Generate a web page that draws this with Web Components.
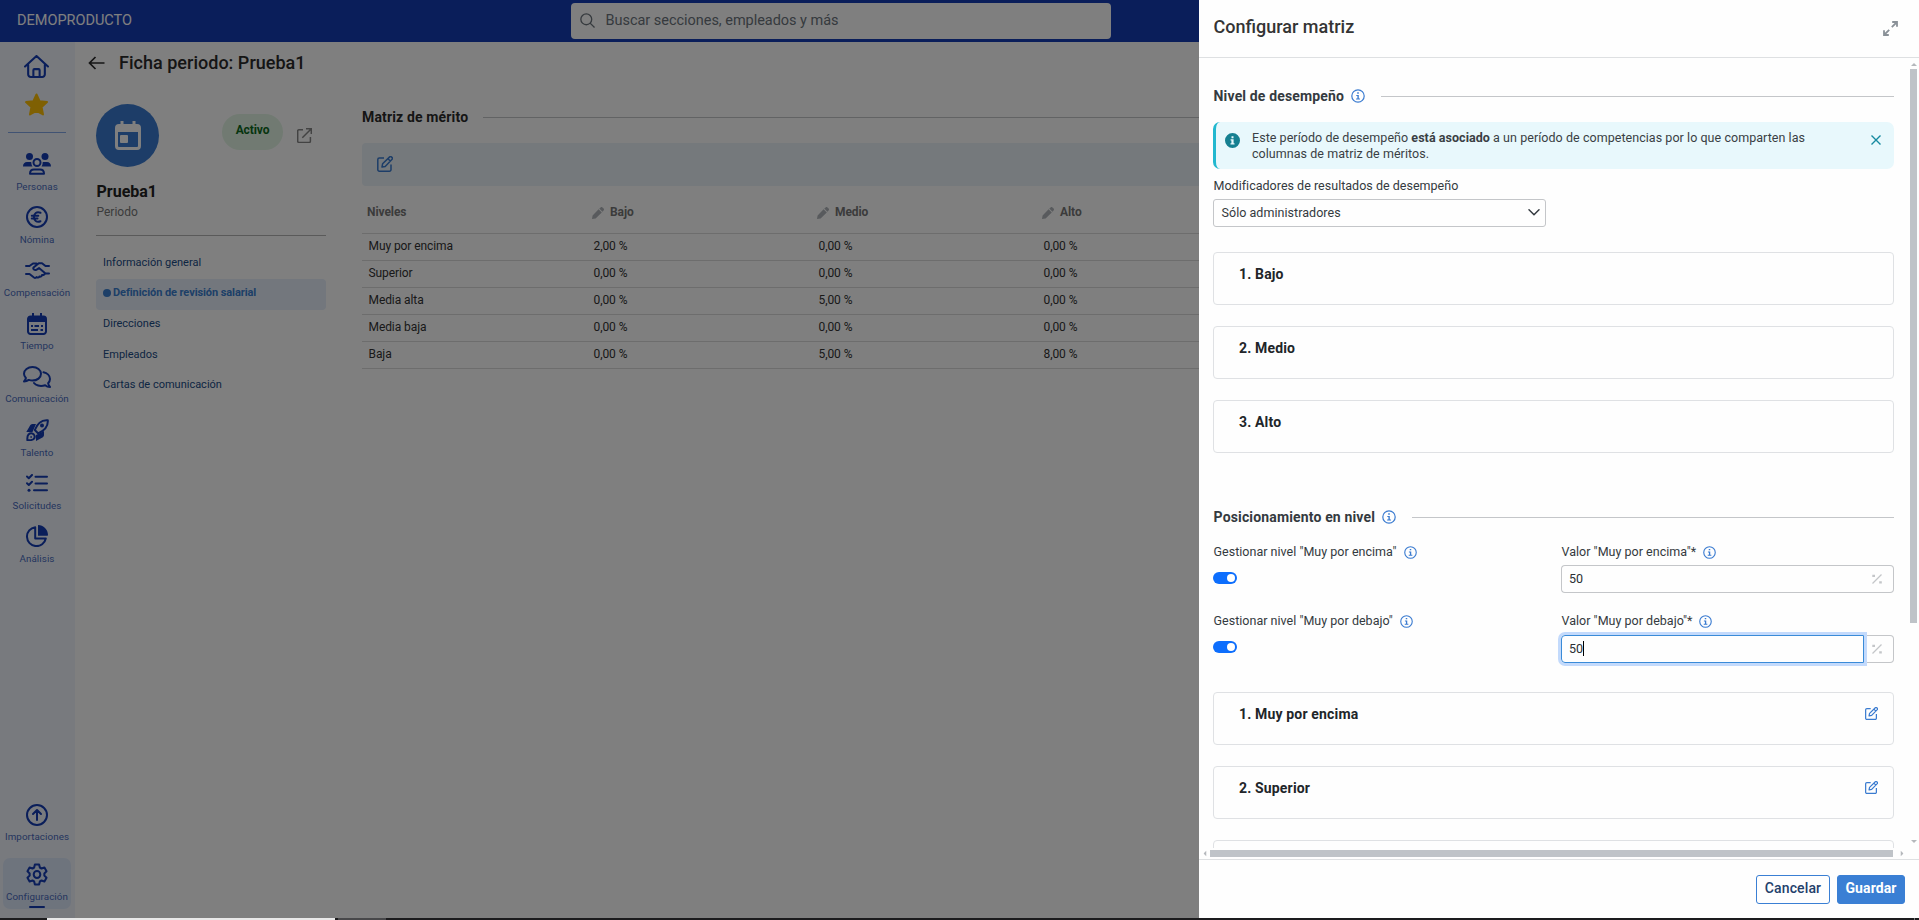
<!DOCTYPE html>
<html lang="es">
<head>
<meta charset="utf-8">
<title>Configurar matriz</title>
<style>
html,body{margin:0;height:100%;overflow:hidden}
body{font-family:Roboto,"Liberation Sans",sans-serif;color:#343a40;background:#fff}
</style>
</head>
<body>
<hr-app></hr-app>
<script>
const ICONS = {
  home:['0 0 24 22','<g fill="none" stroke="currentColor" stroke-width="2" stroke-linejoin="round" stroke-linecap="round"><path d="M1 11 12 1l11 10M4 9v9.500a2.500 2.500 0 0 0 2.500 2.500h11a2.500 2.500 0 0 0 2.500-2.500V9M9 21v-6.500a1 1 0 0 1 1-1h4a1 1 0 0 1 1 1V21"/></g>'],
  star:['0 0 25 23','<path fill="currentColor" stroke="currentColor" stroke-width="2" stroke-linejoin="round" d="m12.500 1.500 3.100 6.700 7.400.9-5.400 5 1.400 7.300-6.500-3.600L6 21.400l1.400-7.300L2 9.100l7.400-.9z"/>'],
  people:['0 0 28 22','<g fill="currentColor"><circle cx="6.500" cy="3.500" r="3.500"/><circle cx="22" cy="3.500" r="3.500"/><path d="M0 13.500C0 10.500 1.700 9 4 9h4.200c.3 2 .3 3 1.300 4.500zM28 13.500C28 10.500 26.300 9 24 9h-4.200c-.3 2-.3 3-1.300 4.500z"/></g><g fill="none" stroke="currentColor" stroke-width="2"><circle cx="14" cy="9.500" r="3.500"/><path stroke-linejoin="round" d="M7 20.800c0-3 1.500-4.300 4-4.300h6c2.500 0 4 1.300 4 4.300z"/></g>'],
  euro:['0 0 22 22','<g fill="none" stroke="currentColor" stroke-width="2"><circle cx="11" cy="11" r="10"/><path stroke-linecap="round" d="M14.500 6.800c-4-1.500-6.500.7-6.500 4.200s2.500 5.700 6.500 4.200M5.800 9.800h6.500M5.800 12.400h5.700"/></g>'],
  hands:['0 0 25 17','<g fill="none" stroke="currentColor" stroke-width="2" stroke-linecap="round" stroke-linejoin="round"><path d="M1 4h3.500L8 1.500h3.500M24 4h-3.500L17 1.200h-3.200L8.500 5.600c-.8 1.200 1 3 2.800 2.200l2.700-1.700 6.500 5.400H24M1 12h3.500l4.500 3.500c1 .7 2 .4 2.400-.4 1 .8 2.600.7 3-.6 1.200.5 2.600-.2 2.600-1.500 1.500.3 3-.7 3-1.800"/></g>'],
  calendar:['0 0 20 22','<path fill="none" stroke="currentColor" stroke-width="2" d="M3.500 3.500h13A2.500 2.500 0 0 1 19 6v12.500a2.500 2.500 0 0 1-2.500 2.500h-13A2.500 2.500 0 0 1 1 18.500V6a2.500 2.500 0 0 1 2.500-2.500z"/><path fill="currentColor" d="M1 5.500A2.500 2.500 0 0 1 3.500 3h13A2.500 2.500 0 0 1 19 5.500V9H1zM5 0h2v4H5zM13 0h2v4h-2zM4 12h2v2H4zM7.500 12H12v2H7.500zM4 16h7v2H4zM13.500 16h2.500v2h-2.500zM14 12h2v2h-2z"/>'],
  chat:['0 0 28 22','<g fill="none" stroke="currentColor" stroke-width="2" stroke-linejoin="round" stroke-linecap="round"><path d="M9.500 1C14.200 1 18 4 18 7.800s-3.800 6.800-8.500 6.800c-1.300 0-2.600-.3-3.700-.7-1.200.9-2.800 1.600-4.800 1.600 1-1 1.700-2.300 1.900-3.500C1.700 10.800 1 9.400 1 7.800 1 4 4.800 1 9.500 1zM20.500 6.300c3.700.8 6.500 3.500 6.500 6.700 0 1.600-.7 3-1.900 4.200.2 1.200.9 2.600 1.900 3.800-2 0-3.600-.7-4.800-1.800-5.400 1.800-9.700-.2-11.200-2.200"/></g>'],
  rocket:['0 0 23 22','<path fill="currentColor" d="M10 5H6.500C5 5 4.200 6 3.500 7.500L.3 13h6.200zM18 12v4c0 1.500-1 2.300-2.500 3L10 22v-6z"/><path fill="none" stroke="currentColor" stroke-width="2" stroke-linejoin="round" d="M8.800 11C11.500 4 15 .5 21.800 1.200c.5 6.800-3 10.300-9.800 13.100zM2.500 15.500c1.800-1.700 4-1.500 5.300 0 1.200 1.500 1 3.500-.4 4.700C6 21.200 3.500 21.300 1.400 21.300c-.2-2 0-4.600 1.100-5.800zM4.500 18h1.200"/><circle fill="currentColor" cx="16" cy="6.600" r="2"/>'],
  tasks:['0 0 22 18','<g fill="none" stroke="currentColor" stroke-width="2" stroke-linecap="round" stroke-linejoin="round"><path d="m1 2.500 1.800 1.700L6 1M1 9.300 2.800 11 6 7.800M9.500 2.800H21M9.500 9.500H21M8 16.200h13"/></g><circle cx="3" cy="16.200" r="1.500" fill="currentColor"/>'],
  pie:['0 0 22 22','<path fill="none" stroke="currentColor" stroke-width="2" stroke-linejoin="round" d="M9.200 2.200A9.500 9.500 0 1 0 19.800 13.500H9.200z"/><path fill="currentColor" d="M12 0c5.500 0 10 4.500 10 10a.7.700 0 0 1-.7.700H12z"/>'],
  upload:['0 0 22 22','<g fill="none" stroke="currentColor" stroke-width="2"><circle cx="11" cy="11" r="10"/><path stroke-linecap="round" stroke-linejoin="round" d="M11 16V6.500M7 10l4-4 4 4"/></g>'],
  gear:['0 0 24 24','<g fill="none" stroke="currentColor" stroke-width="2.200"><circle cx="12" cy="12" r="3.600"/><path stroke-linejoin="round" d="m9.700 1.500h4.600l.8 3.200 1.800 1 3.200-1 2.300 4-2.400 2.300v2l2.400 2.300-2.300 4-3.200-1-1.800 1-.8 3.200H9.700l-.8-3.200-1.800-1-3.200 1-2.300-4L4 13v-2L1.600 8.700l2.300-4 3.200 1 1.800-1z"/></g>'],
  search:['0 0 16 16','<g fill="none" stroke="currentColor" stroke-width="1.400"><circle cx="6.700" cy="6.700" r="5.800"/><path d="m10.800 10.800 4.700 4.700"/></g>'],
  back:['0 0 17 14','<path fill="none" stroke="currentColor" stroke-width="1.700" d="M16.500 7H1.500M7.500 1 1.500 7l6 6"/>'],
  event:['0 0 26 29','<path fill="currentColor" fill-rule="evenodd" d="M5.500 0h3v3h9V0h3v3H22a4 4 0 0 1 4 4v18a4 4 0 0 1-4 4H4a4 4 0 0 1-4-4V7a4 4 0 0 1 4-4h1.500zM3 11v14a1 1 0 0 0 1 1h18a1 1 0 0 0 1-1V11z"/><rect fill="currentColor" x="5" y="14" width="8" height="8" rx="1"/>'],
  external:['0 0 15 15','<path fill="none" stroke="currentColor" stroke-width="1.500" d="M6 1.700H1.800A1.200 1.200 0 0 0 .7 2.900v10.300a1.200 1.200 0 0 0 1.200 1.200h10.300a1.200 1.200 0 0 0 1.200-1.200V9M9 .7h5.300V6M14.300.7 5.300 9.700"/>'],
  edit:['0 0 16 16','<g fill="none" stroke="currentColor" stroke-width="1.500" stroke-linejoin="round"><path d="M7 2H2.300A1.500 1.500 0 0 0 .8 3.500v10.200a1.500 1.500 0 0 0 1.500 1.500h10.200a1.500 1.500 0 0 0 1.500-1.500V8.500M5 11l.6-3.200L12.700.9a1.200 1.200 0 0 1 1.700 0l.7.700a1.200 1.200 0 0 1 0 1.700L8.200 10.400zM11 2.700 13.300 5"/></g>'],
  pencil:['0 0 12 12','<path fill="currentColor" d="M0 12 .6 8.400 6.600 2.200 9.800 5.400 3.600 11.400zM7.300 1.600 8.600.4a1.400 1.400 0 0 1 1.900 0l1.100 1.100a1.400 1.400 0 0 1 0 1.900L10.400 4.700z"/>'],
  expand:['0 0 15 15','<g fill="none" stroke="currentColor" stroke-width="1.800"><path d="M8.800 6.200 13.500 1.500M9.200 1H14v4.800M6.200 8.800 1.500 13.500M1 9.200V14h4.800"/></g>'],
  info:['0 0 14 14','<circle cx="7" cy="7" r="6.200" fill="none" stroke="currentColor" stroke-width="1.200"/><path fill="currentColor" d="M6.200 3.200h1.600v1.500H6.200zM5.300 5.900h2.500v3.600H9v1H5.100v-1h1.300V6.900H5.300z"/>'],
  infofill:['0 0 15 15','<path fill="currentColor" fill-rule="evenodd" d="M7.500 0a7.500 7.500 0 1 1 0 15 7.500 7.500 0 0 1 0-15zM6.500 3.200v2h2v-2zM5.600 6.200v1.300h.8v2.700h-.9v1.300h4v-1.300h-.9v-4z"/>'],
  close:['0 0 10 10','<path fill="none" stroke="currentColor" stroke-width="1.400" d="m.5.5 9 9m0-9-9 9"/>'],
  chevron:['0 0 12 7','<path fill="none" stroke="currentColor" stroke-width="1.500" stroke-linecap="round" d="m1 .8 5 5 5-5"/>'],
  percent:['0 0 10 10','<path stroke="currentColor" stroke-width="1.300" d="M.5 9.500 9.500.5"/><path fill="currentColor" d="M.3.800h2.700v2.200H.3zM7.200 7.200h2.600v2.200H7.200z"/>'],
  tri:['0 0 6 3','<path fill="currentColor" d="M0 3 3 0l3 3z"/>']
};
const define = (name, render) => customElements.define(name, class extends HTMLElement {
  constructor(){ super(); this.attachShadow({mode:'open'}); }
  connectedCallback(){ this.shadowRoot.innerHTML = render(this); }
});
const at = (e,n,d='') => e.getAttribute(n) ?? d;
const icon = (n,w,h,c='') => `<ui-icon name="${n}" w="${w}" h="${h}" class="${c}"></ui-icon>`;

define('ui-icon', e => {
  const [box,body] = ICONS[at(e,'name')];
  return `<style>:host{display:block;flex:none;width:${at(e,'w')}px;height:${at(e,'h')}px}svg{display:block}</style><svg width="${at(e,'w')}" height="${at(e,'h')}" viewBox="${box}" preserveAspectRatio="none">${body}</svg>`;
});

define('top-bar', () => `<style>
:host{display:flex;height:42px;background:#143cb4;align-items:center}
b{font-weight:400;font-size:14.500px;line-height:20px;color:#fff;padding-left:17px;width:571px;box-sizing:border-box;margin-top:-1px}
.s{width:540px;height:36px;border-radius:4px;background:#fff;display:flex;align-items:center;gap:10.500px;padding-left:9px;box-sizing:border-box;color:#6c757d;font-size:14.500px;letter-spacing:-.03px}
.s span{margin-top:-2px}.s ui-icon{margin-top:-1px}
</style><b>DEMOPRODUCTO</b><div class="s">${icon('search',15,15)}<span>Buscar secciones, empleados y más</span></div>`);

define('nav-item', e => `<style>
:host{display:flex;flex-direction:column;align-items:center;height:${at(e,'box','53.200')}px;flex:none;color:#143cb4}
.i{height:23px;display:flex;align-items:center}
span{font-size:9.800px;line-height:12px;margin-top:5px;color:#4a6bbd;letter-spacing:.07px;white-space:nowrap}
:host([active]){background:#dde8fb;border-radius:7px;padding-top:5px;height:46px}
i{display:block;width:16px;height:2px;border-radius:1px;background:#143cb4;margin-top:3px}
</style><div class="i">${icon(at(e,'icon'),at(e,'w'),at(e,'h'))}</div><span>${at(e,'label')}</span>${e.hasAttribute('active')?'<i></i>':''}`);

define('side-nav', () => {
  const items=[['people','28','22','Personas'],['euro','22','22','Nómina'],['hands','25','17','Compensación'],['calendar','20','22','Tiempo'],['chat','28','22','Comunicación'],['rocket','23','22','Talento'],['tasks','22','18','Solicitudes'],['pie','22','22','Análisis']];
  const n=([i,w,h,l],x='')=>`<nav-item icon="${i}" w="${w}" h="${h}" label="${l}" ${x}></nav-item>`;
  return `<style>
:host{display:flex;flex-direction:column;width:75px;flex:none;background:#f0f5fd;box-sizing:border-box}
.h{color:#143cb4;padding:13px 0 0 24px}.st{color:#ffc107;padding:15px 0 0 24px}
hr{border:0;height:1px;background:#82a6e6;width:58px;margin:16px 0 19.600px 8px;flex:none}
.g{flex:1}
nav-item{margin-right:1px}nav-item[active]{margin:0 4px 9px 3px}
</style><div class="h">${icon('home',25,23)}</div><div class="st">${icon('star',25,23)}</div><hr>
${items.map(x=>n(x)).join('')}<div class="g"></div>${n(['upload','22','22','Importaciones'],'box="55"')}${n(['gear','22','23','Configuración'],'active')}`;
});

define('side-link', e => `<style>
:host{display:flex;align-items:center;height:30.500px;padding-left:7px;font-size:11px;color:#1a4c86;box-sizing:border-box}
:host([active]){background:#e6eefa;border-radius:4px;color:#3a7fd0;font-weight:700;gap:2px;height:31px;letter-spacing:-.08px}
i{width:8px;height:8px;border-radius:50%;background:#3a7fd0;margin-top:-2px}
span{margin-top:-2px}
:host([active]) span{margin-top:-3px}
</style>${e.hasAttribute('active')?'<i></i>':''}<span><slot></slot></span>`);

define('profile-card', () => `<style>
:host{display:block;width:230px;flex:none}
.t{display:flex;height:63px}
.c{width:63px;height:63px;border-radius:50%;background:#3a7bd0;color:#fff;display:grid;place-items:center}
.p{margin:10px 0 0 63px;width:61px;height:36px;border-radius:18px;background:#e2f5e4;color:#0c6b1c;font-weight:700;font-size:12px;letter-spacing:-.1px;line-height:33px;text-align:center}
.x{color:#868686;margin:24px 0 0 14px}
h2{font-size:16px;line-height:20px;margin:15px 0 0 .5px;color:#222;font-weight:700}
p{font-size:12px;line-height:16px;margin:2px 0 0 .5px;color:#777}
hr{border:0;height:1px;background:#b5b5b5;margin:15px 0 12px}
</style><div class="t"><div class="c">${icon('event',26,29)}</div><div class="p">Activo</div><div class="x">${icon('external',15,15)}</div></div>
<h2>Prueba1</h2><p>Periodo</p><hr>
<side-link>Información general</side-link><side-link active>Definición de revisión salarial</side-link><side-link>Direcciones</side-link><side-link>Empleados</side-link><side-link>Cartas de comunicación</side-link>`);

define('section-title', e => `<style>
:host{display:flex;align-items:center;height:20px;font-size:14px;font-weight:700;letter-spacing:.15px}
hr{flex:1;border:0;height:1px;background:#c4c6c9;margin:1px 0 0 ${e.hasAttribute('info')?16:15}px}
ui-icon{color:#3a7bd0;margin-left:7px}
span{margin-top:-1px;white-space:nowrap}
</style><span><slot></slot></span>${e.hasAttribute('info')?icon('info',14,14):''}<hr>`);

define('merit-table', () => {
  const rows=[['Muy por encima','2,00 %','0,00 %','0,00 %'],['Superior','0,00 %','0,00 %','0,00 %'],['Media alta','0,00 %','5,00 %','0,00 %'],['Media baja','0,00 %','0,00 %','0,00 %'],['Baja','0,00 %','5,00 %','8,00 %']];
  return `<style>
:host{display:block;flex:1;font-size:12px;letter-spacing:-.08px;color:#333}
section-title{color:#2b2b2b}
.bar{height:43px;background:#eaf3f9;border-radius:4px;margin-top:16px;padding:13px 15px;box-sizing:border-box;color:#3a7bd0}
.r{display:grid;grid-template-columns:225px 225px 225px 225px;height:27px;border-bottom:1px solid #dadada;box-sizing:border-box;line-height:24px}
.r span{padding-left:6.500px}
.h{height:48px;line-height:53px;font-weight:700;color:#777}
.h span{display:flex;padding-left:5px;gap:6px}
.h ui-icon{margin-top:21px;color:#b0b5ba}
</style><section-title>Matriz de mérito</section-title><div class="bar">${icon('edit',16,16)}</div>
<div class="r h"><span>Niveles</span>${['Bajo','Medio','Alto'].map(t=>`<span>${icon('pencil',12,12)}${t}</span>`).join('')}</div>
${rows.map(r=>`<div class="r">${r.map(c=>`<span>${c}</span>`).join('')}</div>`).join('')}`;
});

define('period-page', () => `<style>
:host{display:block;flex:1;padding:0 0 0 21px;overflow:hidden}
.t{display:flex;align-items:center;gap:14px;height:41px;margin-left:-8px;font-size:18px;font-weight:500;color:#2b2b2b;letter-spacing:.02px}
.t span{margin-top:-1px}
.b{display:flex;padding-top:21px;gap:36px}
merit-table{padding-top:3px}
</style><div class="t">${icon('back',17,14)}<span>Ficha periodo: Prueba1</span></div><div class="b"><profile-card></profile-card><merit-table></merit-table></div>`);

define('info-alert', () => `<style>
:host{display:flex;height:47px;box-sizing:border-box;background:#e8f8fc;border-left:3px solid #22b8cf;border-radius:7px;font-size:12.500px;line-height:16px;color:#3a3f44}
ui-icon.i{color:#168091;margin:11px 12px 0 9px}
p{margin:8px 0 0;flex:1;white-space:nowrap;letter-spacing:.05px}
ui-icon.x{color:#168aa0;margin:13px 13px 0 0}
</style>${icon('infofill',15,15,'i')}<p>Este período de desempeño <b>está asociado</b> a un período de competencias por lo que comparten las<br>columnas de matriz de méritos.</p>${icon('close',10,10,'x')}`);

define('level-card', e => `<style>
:host{display:flex;justify-content:space-between;height:53px;box-sizing:border-box;border:1px solid #dfe1e4;border-radius:4px;padding:0 15.500px 0 25px;font-size:14px;font-weight:700;color:#212529;line-height:43px;letter-spacing:.16px;flex:none}
ui-icon{color:#3a7bd0;margin-top:14px}
</style><span><slot></slot></span>${e.hasAttribute('edit')?icon('edit',13,13):''}`);

define('field-label', e => `<style>
:host{display:flex;flex:none;align-items:center;gap:7px;height:16px;font-size:12.500px;color:#343a40;letter-spacing:.02px;padding-left:.5px}
ui-icon{color:#3a7bd0}
span{margin-top:-1px;white-space:nowrap}
</style><span><slot></slot></span>${e.hasAttribute('info')?icon('info',13,13):''}`);

define('select-box', () => `<style>
:host{display:flex;justify-content:space-between;align-items:center;width:333px;height:28px;box-sizing:border-box;border:1px solid #c4c6c9;border-radius:3px;padding:0 5px 2px 7.500px;font-size:12.500px;color:#343a40;letter-spacing:.04px}
</style><span><slot></slot></span>${icon('chevron',12,7)}`);

define('toggle-switch', () => `<style>
:host{display:flex;justify-content:flex-end;align-items:center;width:24px;height:11.500px;border-radius:6px;background:#0d6efd;padding-right:2px;box-sizing:border-box}
i{width:8px;height:8px;border-radius:50%;background:#fff}
</style><i></i>`);

define('percent-input', e => `<style>
:host{display:flex;height:28px;width:333px;font-size:12.500px;color:#2b2f33}
.v{flex:1;border:1px solid #c4c6c9;border-right:0;border-radius:4px 0 0 4px;display:flex;align-items:center;padding:0 0 2px 7px;box-sizing:border-box}
.u{width:30px;box-sizing:border-box;border:1px solid #c4c6c9;border-left:0;border-radius:0 4px 4px 0;color:#c4c6c9;padding:8px 0 0 8px}
:host([focused]) .v{border:1px solid #3a8bd8;box-shadow:0 0 0 3px #c3dafc;z-index:1;margin-right:1px}
:host([focused]) .u{margin-left:-1px}
i{width:1px;height:15px;background:#000}
</style><div class="v"><slot></slot>${e.hasAttribute('focused')?'<i></i>':''}</div><div class="u">${icon('percent',10,10)}</div>`);

define('panel-body', () => `<style>
:host{display:grid;grid-template:minmax(0,1fr) 11px/minmax(0,1fr) 20px;height:801px;flex:none}
.c{overflow:hidden;padding:28px 5px 0 14px;display:flex;flex-direction:column}
section-title{flex:none;padding-left:.6px}
info-alert{margin-top:16px;flex:none}
.l{margin:9px 0 5px}
select-box{margin-bottom:25px;flex:none}
level-card+level-card{margin-top:21px}
.two{display:grid;grid-template-columns:348px 333px;flex:none}
.two toggle-switch{margin-top:12px}.two percent-input{margin-top:5px}
.a{margin-top:17px}.bb{margin:20px 0 29px}
.v{display:flex;flex-direction:column;align-items:center;padding:5px 0 0 9px;color:#b5b8bc}
.v i{width:7px;height:554px;background:#bfc3c8;margin-top:3px}
.v .d{transform:rotate(180deg);margin-top:217px}
.hh{display:flex;align-items:flex-start;padding:2px 0 0 2px;height:9px;color:#b5b8bc;grid-column:1/3}
.hh i{width:683px;height:7px;background:#bfc3c8;margin:0 6px 0 2px}
.lft{transform:rotate(-90deg);margin-top:2px;margin-left:1px}.rgt{transform:rotate(90deg);margin-top:2px}
</style><div class="c">
<section-title info>Nivel de desempeño</section-title>
<info-alert></info-alert>
<field-label class="l">Modificadores de resultados de desempeño</field-label>
<select-box>Sólo administradores</select-box>
<level-card>1. Bajo</level-card><level-card>2. Medio</level-card><level-card>3. Alto</level-card>
<section-title info style="margin-top:54px">Posicionamiento en nivel</section-title>
<div class="two a"><div><field-label info>Gestionar nivel "Muy por encima"</field-label><toggle-switch></toggle-switch></div><div><field-label info>Valor "Muy por encima"*</field-label><percent-input>50</percent-input></div></div>
<div class="two bb"><div><field-label info>Gestionar nivel "Muy por debajo"</field-label><toggle-switch></toggle-switch></div><div><field-label info>Valor "Muy por debajo"*</field-label><percent-input focused style="margin-top:6px">50</percent-input></div></div>
<level-card edit>1. Muy por encima</level-card><level-card edit>2. Superior</level-card><level-card></level-card>
</div><div class="v">${icon('tri',6,3)}<i></i>${icon('tri',6,3,'d')}</div>
<div class="hh">${icon('tri',6,3,'lft')}<i></i>${icon('tri',6,3,'rgt')}</div>`);

define('config-panel', () => `<style>
:host{display:flex;flex-direction:column;background:#fefefe}
header{height:58px;flex:none;box-sizing:border-box;border-bottom:1px solid #dee0e2;display:flex;justify-content:space-between;padding:17px 21px 0 14.500px;font-size:18px;line-height:20px;font-weight:500;color:#343434}
header ui-icon{margin-top:4px;color:#8a9198}
footer{flex:1;border-top:1px solid #dee0e2;display:flex;justify-content:flex-end;gap:7px;padding:15px 14px 0 0}
.btn{box-sizing:border-box;height:29px;border:1px solid #3a7fd4;border-radius:3px;font-size:14px;font-weight:500;line-height:25px;text-align:center;color:#23406b;width:74px;letter-spacing:.12px}
.ok{background:#3a7fd4;color:#fff;width:68px;font-weight:700}
</style><header><span>Configurar matriz</span>${icon('expand',15,15)}</header><panel-body></panel-body><footer><div class="btn">Cancelar</div><div class="btn ok">Guardar</div></footer>`);

define('task-strip', () => `<style>
:host{display:flex;height:2px;background:#1c1c1e}
i{height:2px}
</style><i style="width:47px"></i><i style="width:288px;background:#e8e8e8"></i><i style="width:3px"></i><i style="width:48px;background:#48484a"></i><i style="width:1528px"></i><i style="width:1px;background:#777"></i>`);

define('hr-app', () => `<style>
:host{display:grid;grid-template:918px 2px/1919px;width:1919px;height:920px;overflow:hidden}
.app{display:flex;flex-direction:column;grid-area:1/1}
.m{display:flex;flex:1;background:#fff}
.veil{grid-area:1/1;z-index:2;background:rgba(0,0,0,.5)}
config-panel{grid-area:1/1;z-index:3;width:720px;justify-self:end}
task-strip{grid-area:2/1}
</style><div class="app"><top-bar></top-bar><div class="m"><side-nav></side-nav><period-page></period-page></div></div><div class="veil"></div><config-panel></config-panel><task-strip></task-strip>`);
</script>
</body>
</html>
